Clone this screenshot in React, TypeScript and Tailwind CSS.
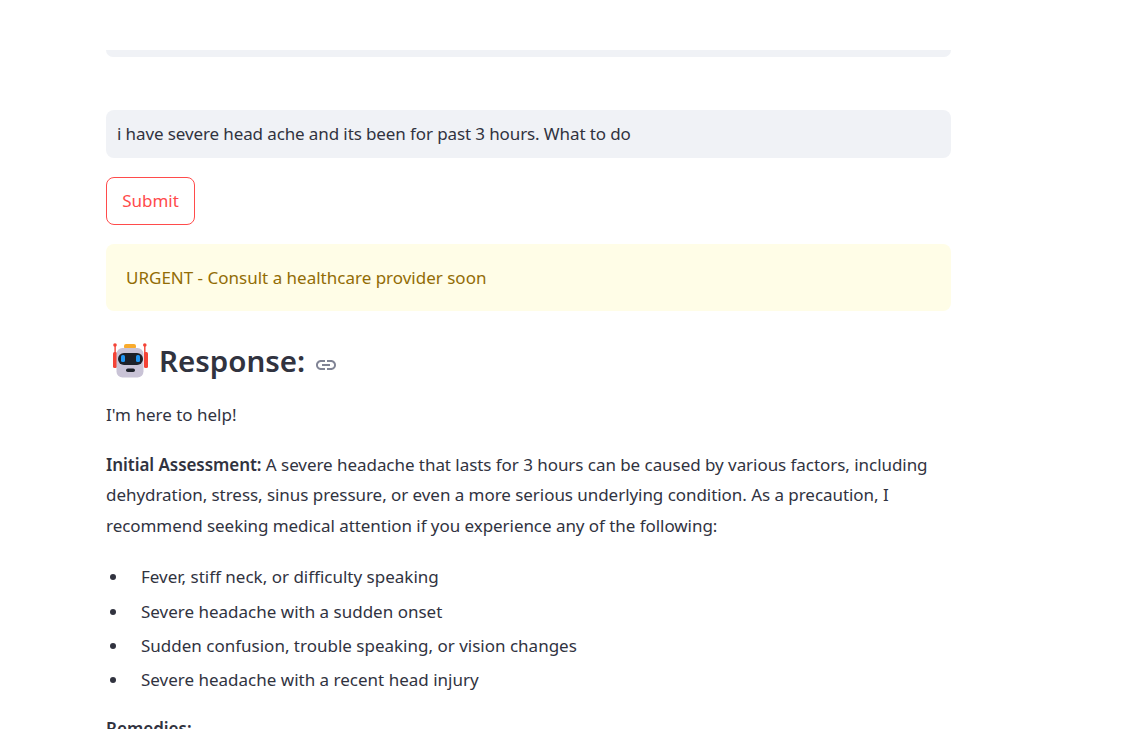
const body = "font-['Noto_Sans','Liberation_Sans',sans-serif]";

// drawn in page pixels: origin sits at the icon's top-left
function RobotIcon() {
  return (
    <svg viewBox="0 0 38 36" className="w-[38px] h-[36px] shrink-0 ml-[5px] mt-[2px]" aria-hidden="true">
      <rect x="13" y="1" width="12" height="5" rx="2" fill="#f9ab2c" />
      <rect x="2" y="9" width="4" height="16" rx="1.5" fill="#f44336" />
      <rect x="33" y="9" width="4" height="16" rx="1.5" fill="#f44336" />
      <rect x="3.4" y="2" width="1.4" height="10" fill="#f44336" />
      <rect x="33.1" y="2" width="1.4" height="10" fill="#f44336" />
      <circle cx="4" cy="2" r="1.8" fill="#f44336" />
      <circle cx="33.8" cy="2" r="1.8" fill="#f44336" />
      <rect x="5.5" y="5" width="27" height="29.5" rx="6" fill="#c9c3d6" />
      <rect x="7" y="10" width="25" height="12" rx="6" fill="#1d2129" />
      <rect x="10" y="12" width="4" height="7" rx="1.5" fill="#2196f3" />
      <rect x="25" y="12" width="4" height="7" rx="1.5" fill="#2196f3" />
      <rect x="15" y="25.5" width="9" height="3.6" rx="1.8" fill="#1d2129" />
    </svg>
  );
}

function LinkIcon() {
  return (
    <svg viewBox="0 0 24 24" className="w-[24px] h-[24px] shrink-0" fill="#808495" aria-hidden="true">
      <path d="M3.9 12c0-1.71 1.39-3.1 3.1-3.1h4V7H7c-2.76 0-5 2.24-5 5s2.24 5 5 5h4v-1.9H7c-1.71 0-3.1-1.39-3.1-3.1zM8 13h8v-2H8v2zm9-6h-4v1.9h4c1.71 0 3.1 1.39 3.1 3.1s-1.39 3.1-3.1 3.1h-4V17h4c2.76 0 5-2.24 5-5s-2.24-5-5-5z" />
    </svg>
  );
}

const symptoms = [
  "Fever, stiff neck, or difficulty speaking",
  "Severe headache with a sudden onset",
  "Sudden confusion, trouble speaking, or vision changes",
  "Severe headache with a recent head injury",
];

export default function App() {
  return (
    <div className={`h-[729px] overflow-hidden bg-white text-[#31333f] text-[17px] ${body}`}>
      <div className="w-[845px] ml-[106px]">
        <div className="mt-[50px] h-[7px] bg-[#f0f2f6] rounded-b-lg" />
        <div className="mt-[53px] h-[48px] bg-[#f0f2f6] rounded-lg px-[11px] flex items-center tracking-[-0.11px]">
          i have severe head ache and its been for past 3 hours. What to do
        </div>
        <button className="mt-[19px] block h-[48px] w-[89px] rounded-lg border border-[#ff4b4b] bg-white text-[#ff4b4b]">
          Submit
        </button>
        <div className="mt-[19px] h-[67px] bg-[#fffde7] rounded-lg px-[20px] flex items-center text-[#926c05]">
          URGENT - Consult a healthcare provider soon
        </div>
        <h2 className="mt-[29px] h-[40px] flex items-center text-[29.5px] font-semibold">
          <RobotIcon />
          <span className="ml-[10px] mt-[2px]">Response:</span>
          <span className="ml-[9px] mt-[10px]"><LinkIcon /></span>
        </h2>
        <p className="mt-[20px] leading-[30px]">I'm here to help!</p>
        <p className="mt-[20px] leading-[30.4px] tracking-[-0.05px]">
          <strong className="font-semibold">Initial Assessment:</strong> A severe headache that lasts for 3 hours can be caused by various factors, including dehydration, stress, sinus pressure, or even a more serious underlying condition. As a precaution, I recommend seeking medical attention if you experience any of the following:
        </p>
        <ul className="mt-[21px] pl-[4px]">
          {symptoms.map((s) => (
            <li key={s} className="h-[34.4px] leading-[30px] flex items-start">
              <span className="w-[6px] h-[6px] mt-[12px] mr-[25px] rounded-full bg-[#31333f] shrink-0" />
              <span>{s}</span>
            </li>
          ))}
        </ul>
        <p className="mt-[14px] font-semibold leading-[30px]">Remedies:</p>
      </div>
    </div>
  );
}
